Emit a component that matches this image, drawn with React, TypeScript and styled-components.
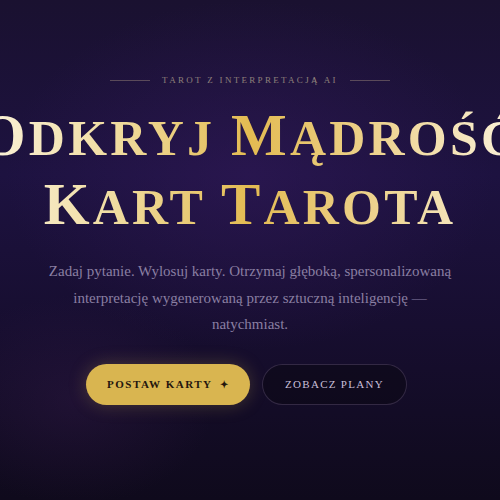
import React from "react";
import styled, { createGlobalStyle } from "styled-components";

const Global = createGlobalStyle`
  html, body { margin: 0; padding: 0; background: #150d28; }
  body { width: 500px; height: 500px; overflow: hidden; }
`;

const Page = styled.main`
  width: 500px;
  height: 500px;
  overflow: hidden;
  background:
    radial-gradient(ellipse 70% 50% at 50% 35%, rgba(52, 26, 92, 0.5), transparent 70%),
    radial-gradient(ellipse 40% 30% at 15% 80%, rgba(60, 30, 80, 0.3), transparent 70%),
    linear-gradient(180deg, #1a1130 0%, #1d1240 35%, #170e30 65%, #0f0a1c 100%);
  display: flex;
  flex-direction: column;
  align-items: center;
  padding-top: 75px;
  box-sizing: border-box;
`;

const Eyebrow = styled.div`
  display: flex;
  align-items: center;
  gap: 12px;
  font-family: "Liberation Serif", serif;
  font-size: 9px;
  letter-spacing: 2.3px;
  color: #8e807a;
  text-transform: uppercase;
  white-space: nowrap;
`;

const Rule = styled.span`
  width: 40px;
  height: 1px;
  background: rgba(150, 130, 120, 0.5);
`;

const Title = styled.h1`
  margin: 17px 0 0;
  font-family: "Liberation Serif", serif;
  font-weight: 700;
  font-size: 50px;
  line-height: 66px;
  letter-spacing: 3.2px;
  text-transform: uppercase;
  text-align: center;
  white-space: nowrap;
  background: linear-gradient(90deg, #fbf3dc 0%, #f0dca0 25%, #e3bb52 50%, #eed493 75%, #fbf3dc 100%);
  -webkit-background-clip: text;
  background-clip: text;
  color: transparent;
`;

const Line = styled.span`
  display: block;
`;

const Cap = styled.span`
  font-size: 59px;
`;

const Lead = styled.p`
  margin: 18px 0 0;
  width: 420px;
  font-family: "Liberation Serif", serif;
  font-size: 15px;
  line-height: 26.5px;
  color: #8a7fa2;
  text-align: center;
`;

const Actions = styled.div`
  display: flex;
  gap: 12px;
  margin-top: 26px;
  margin-right: 7px;
`;

const Button = styled.button<{ $primary?: boolean }>`
  height: 41px;
  padding: 0;
  border-radius: 21px;
  font-family: "Liberation Serif", serif;
  font-size: 11px;
  letter-spacing: 1.5px;
  text-transform: uppercase;
  white-space: nowrap;
  display: flex;
  align-items: center;
  justify-content: center;
  gap: 7px;
  cursor: pointer;
  ${(p) =>
    p.$primary
      ? `
    background: #d9b550;
    color: #24160e;
    border: none;
    width: 164px;
    font-weight: 700;
    box-shadow: 0 0 18px rgba(217, 181, 80, 0.25);
  `
      : `
    background: rgba(12, 8, 22, 0.6);
    color: #c9bfd8;
    border: 1px solid rgba(120, 100, 140, 0.35);
    width: 145px;
    font-weight: 400;
    letter-spacing: 1.3px;
  `}
`;

const Star = styled.span`
  font-size: 10px;
`;

export default function App() {
  return (
    <>
      <Global />
      <Page>
        <Eyebrow>
          <Rule />
          Tarot z interpretacją AI
          <Rule />
        </Eyebrow>
        <Title>
          <Line>
            <Cap>O</Cap>dkryj <Cap>M</Cap>ądrość
          </Line>
          <Line>
            <Cap>K</Cap>art <Cap>T</Cap>arota
          </Line>
        </Title>
        <Lead>
          Zadaj pytanie. Wylosuj karty. Otrzymaj głęboką, spersonalizowaną interpretację
          wygenerowaną przez sztuczną inteligencję — natychmiast.
        </Lead>
        <Actions>
          <Button $primary>
            Postaw karty <Star>✦</Star>
          </Button>
          <Button>Zobacz plany</Button>
        </Actions>
      </Page>
    </>
  );
}
